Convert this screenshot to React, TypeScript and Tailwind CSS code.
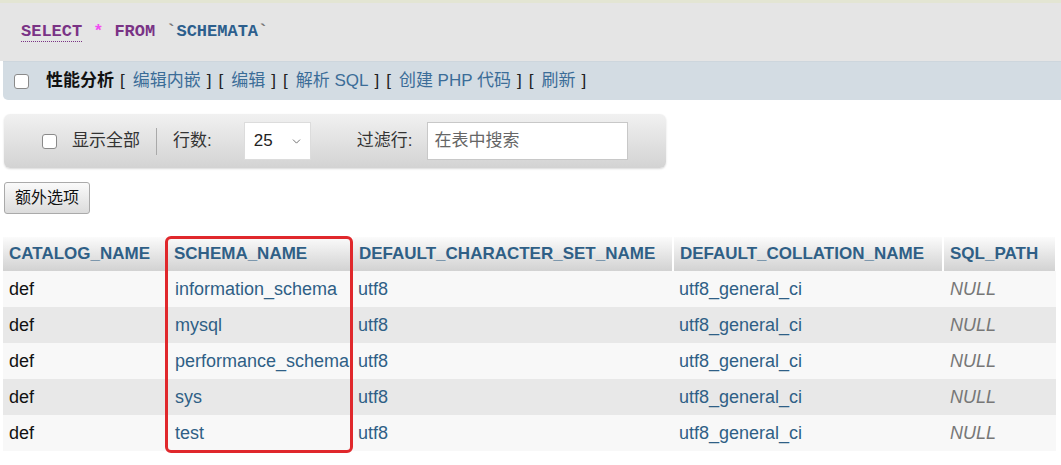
import { ChevronDown } from "lucide-react";

const ROWS = [
  "information_schema",
  "mysql",
  "performance_schema",
  "sys",
  "test",
];

const LINKS = ["编辑内嵌", "编辑", "解析 SQL", "创建 PHP 代码", "刷新"];

const COLS = [
  { name: "CATALOG_NAME", w: "w-[164px]" },
  { name: "SCHEMA_NAME", w: "w-[185px]" },
  { name: "DEFAULT_CHARACTER_SET_NAME", w: "w-[321px]" },
  { name: "DEFAULT_COLLATION_NAME", w: "w-[270px]" },
  { name: "SQL_PATH", w: "w-[113px]" },
];

function Box() {
  return <span className="inline-block w-[15px] h-[15px] rounded-[3px] border border-[#8a8a8a] bg-white shrink-0" />;
}

export default function App() {
  const sans = "font-['Liberation_Sans','Noto_Sans_CJK_SC',sans-serif]";
  return (
    <div className={`w-[1061px] h-[465px] bg-white overflow-hidden ${sans}`}>
      {/* sql query */}
      <div className="h-[61px] bg-[#e5e5e5] border-t-[3px] border-[#e3e5d3] flex items-center pl-[21px] font-['Liberation_Mono',monospace] text-[17px] font-bold">
        <span className="text-[#7a3385] border-b border-dotted border-[#7a3385] leading-[18px]">SELECT</span>
        <span className="text-[#f24cf2] ml-[11px]">*</span>
        <span className="text-[#7a3385] ml-[11px]">FROM</span>
        <span className="text-[#2d5f8d] ml-[11px]">
          <span className="text-[#777]">`</span>SCHEMATA<span className="text-[#777]">`</span>
        </span>
      </div>

      {/* query actions */}
      <div className="h-[39px] bg-[#d3dce3] border-t border-[#cdd6dd] rounded-bl-[5px] ml-[3px] flex items-center pl-[11px] text-[17px] text-[#222]">
        <Box />
        <span className="ml-[17px] font-bold text-[#111]">性能分析</span>
        {LINKS.map((l, i) => (
          <span key={l} className={`${i === 0 ? "ml-[6px]" : "ml-[7px]"} whitespace-pre`}>
            [<span className="text-[#3b6d98] ml-[8px] mr-[6px]">{l}</span>]
          </span>
        ))}
      </div>

      {/* navigation */}
      <div className="mt-[14px] ml-[4px] w-[662px] h-[54px] rounded-[6px] bg-gradient-to-b from-[#f1f1f1] to-[#d3d3d3] shadow-[0_1px_2px_rgba(0,0,0,0.15)] flex items-center pl-[38px] text-[17px] text-[#333]">
        <Box />
        <span className="ml-[15px]">显示全部</span>
        <span className="ml-[16px] w-px h-[27px] bg-[#a9a9a9]" />
        <span className="ml-[16px]">行数:</span>
        <div className="ml-[32px] w-[67px] h-[38px] bg-white border border-[#dcdcdc] flex items-center pl-[9px] pr-[7px] justify-between">
          <span className="text-[#222]">25</span>
          <ChevronDown size={13} strokeWidth={1.5} className="text-[#555]" />
        </div>
        <span className="ml-[46px]">过滤行:</span>
        <div className="ml-[15px] w-[201px] h-[38px] bg-white border border-[#c8c8c8] flex items-center pl-[6px] text-[#666]">
          在表中搜索
        </div>
      </div>

      {/* extra options */}
      <div className="mt-[14px] ml-[4px]">
        <button className="h-[32px] w-[86px] rounded-[3px] border border-[#aaa] bg-gradient-to-b from-[#fafafa] to-[#dcdcdc] text-[16px] text-[#111]">
          额外选项
        </button>
      </div>

      {/* results */}
      <div className="relative mt-[23px] ml-[3px]">
        <table className="border-collapse">
          <thead>
            <tr>
              {COLS.map((c) => (
                <th
                  key={c.name}
                  className={`${c.w} h-[34px] p-0 pl-[6px] text-left text-[17px] font-bold text-[#2f5f86] bg-gradient-to-b from-[#fbfbfb] to-[#d2d2d2] border-r-2 border-white`}
                >
                  {c.name}
                </th>
              ))}
            </tr>
          </thead>
          <tbody>
            {ROWS.map((r, i) => (
              <tr key={r} className={i % 2 === 0 ? "bg-[#f8f8f8]" : "bg-[#e8e8e8]"}>
                <td className="h-[36px] p-0 pl-[6px] text-[18px] text-[#111]">def</td>
                <td className="h-[36px] p-0 pl-[8px] text-[18px] text-[#2f5f86] whitespace-nowrap">{r}</td>
                <td className="h-[36px] p-0 pl-[6px] text-[18px] text-[#2f5f86]">utf8</td>
                <td className="h-[36px] p-0 pl-[6px] text-[18px] text-[#2f5f86]">utf8_general_ci</td>
                <td className="h-[36px] p-0 pl-[7px] text-[18px] text-[#777] italic">NULL</td>
              </tr>
            ))}
          </tbody>
        </table>
        {/* highlight */}
        <div className="absolute left-[162px] top-[-1px] w-[188px] h-[217px] border-[3px] border-[#e0282c] rounded-[6px] pointer-events-none" />
      </div>
    </div>
  );
}
